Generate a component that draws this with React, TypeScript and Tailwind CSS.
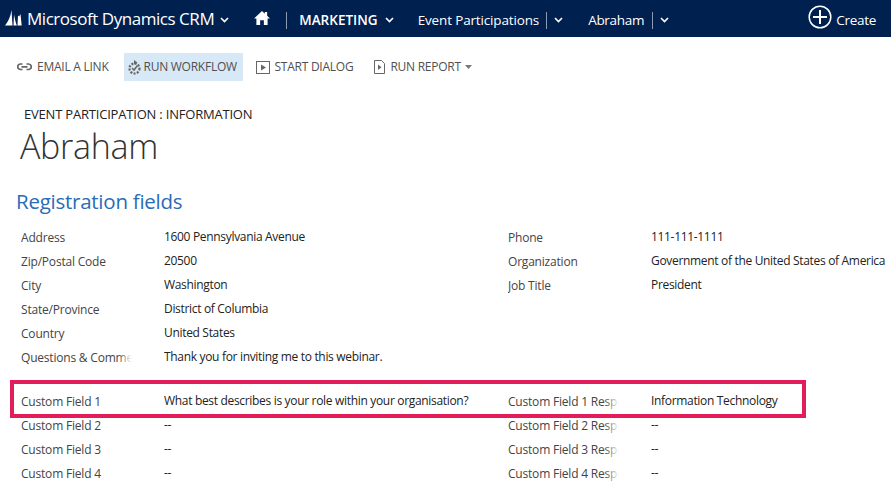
import React from "react";

const Chev = ({ className = "" }: { className?: string }) => (
  <svg width="9" height="6" viewBox="0 0 9 6" className={className}>
    <path d="M1 1l3.500 3.500L8 1" fill="none" stroke="#fff" strokeWidth="1.6" />
  </svg>
);
const Sep = ({ className = "" }: { className?: string }) => (
  <span className={`block w-px h-[17px] bg-[#8c9ab3] ${className}`} />
);

const Label = ({ text }: { text?: string }) => (
  <div className="relative w-[111px] overflow-hidden whitespace-nowrap text-[#444] tracking-[-0.2px]">
    {text}
    <span className="absolute right-0 top-0 h-full w-[14px] bg-linear-to-l from-white to-transparent" />
  </div>
);

const Row = ({ a, b, c, d }: { a: string; b: string; c?: string; d?: string }) => (
  <div className="flex h-6 items-center text-[12px] leading-6">
    <div className="w-[164px] pl-[21px] shrink-0"><Label text={a} /></div>
    <div className="w-[344px] shrink-0 overflow-hidden whitespace-nowrap text-[#222] -mt-[2px] tracking-[-0.32px]">{b}</div>
    <div className="w-[143px] shrink-0"><Label text={c} /></div>
    <div className="flex-1 overflow-hidden whitespace-nowrap text-[#222] -mt-[2px] tracking-[-0.32px]">{d}</div>
  </div>
);

export default function App() {
  return (
    <div className="w-[891px] h-[488px] overflow-hidden bg-white relative font-['Open_Sans','Noto_Sans',sans-serif]">
      <header className="h-[37px] bg-[#002050] flex items-center text-white">
        <svg width="17" height="16" viewBox="0 0 17 16" className="ml-[5px] -mt-[1px]" fill="#fff">
          <path d="M0 15.500C3 12 5.500 7 6.500 0l1 15.500z" />
          <path d="M8.500 15.500L9 4.500c.8 4 1.600 8 2.800 11z" />
          <path d="M12.500 15.500L13 5.500l1.200 1L15.500 4l1.200 11.500z" />
        </svg>
        <span className="ml-[5px] text-[17px] tracking-[-0.46px] leading-none -mt-[1px]">Microsoft Dynamics CRM</span>
        <Chev className="ml-[6px] mt-[2px]" />
        <svg width="16" height="14" viewBox="0 0 17 15" fill="#fff" className="ml-[25px] -mt-[1px]">
          <path d="M8.500 0L0 8h2.500v7h4v-5h4v5h4V8H17l-3-2.800V1h-2.500v2z" />
        </svg>
        <Sep className="ml-[16px] mt-[3px]" />
        <span className="ml-[12px] mt-[3px] text-[13.500px] font-semibold tracking-[0.02px]">MARKETING</span>
        <Chev className="ml-[7px] mt-[3px]" />
        <span className="ml-[24px] mt-[3px] text-[13.500px] tracking-[-0.15px]">Event Participations</span>
        <Sep className="ml-[7px] mt-[3px]" />
        <Chev className="ml-[7px] mt-[3px]" />
        <span className="ml-[25px] mt-[3px] text-[13.500px] tracking-[-0.3px]">Abraham</span>
        <Sep className="ml-[8px] mt-[3px]" />
        <Chev className="ml-[7px] mt-[3px]" />
        <div className="ml-auto mr-[15px] flex items-center">
          <svg width="24" height="24" viewBox="0 0 24 24" fill="none" stroke="#fff" className="-mt-[3px]">
            <circle cx="12" cy="12" r="10.800" strokeWidth="1.500" />
            <path d="M12 5v14M5 12h14" strokeWidth="2" />
          </svg>
          <span className="ml-[4px] mt-[3px] text-[13.500px] tracking-[-0.3px]">Create</span>
        </div>
      </header>

      <div className="flex items-center h-[28px] mt-[16px] pl-[17px] text-[12px] text-[#505050] tracking-[-0.25px]">
        <div className="flex items-center">
          <svg width="15" height="8" viewBox="0 0 15 8" fill="none" stroke="#666" strokeWidth="1.700">
            <path d="M5.500 1H3.500a2.500 2.500 0 0 0 0 5.500h2M9.500 1h2a2.500 2.500 0 0 1 0 5.500h-2M4.500 3.800h6" />
          </svg>
          <span className="ml-[5px]">EMAIL A LINK</span>
        </div>
        <div className="ml-[16px] h-[28px] w-[119px] bg-[#d7e9f7] flex items-center pl-[3px]">
          <svg width="15" height="15" viewBox="0 0 15 15" fill="none" stroke="#666">
            <circle cx="7.500" cy="8.500" r="5" strokeWidth="2.200" strokeDasharray="2 1.300" />
            <path d="M5 8l2 2 3.500-4.500" strokeWidth="1.500" />
            <path d="M7 0l3.500 2.500L7 4.500z" fill="#666" stroke="none" />
          </svg>
          <span className="ml-[1px]">RUN WORKFLOW</span>
        </div>
        <div className="ml-[13px] flex items-center">
          <svg width="14" height="13" viewBox="0 0 14 13" fill="none">
            <rect x=".5" y=".5" width="13" height="12" stroke="#666" />
            <path d="M5 3.500v6l5-3z" fill="#666" />
          </svg>
          <span className="ml-[4px]">START DIALOG</span>
        </div>
        <div className="ml-[21px] flex items-center">
          <svg width="11" height="14" viewBox="0 0 11 14" fill="none">
            <path d="M.5.5h7l3 3v10H.5z" stroke="#666" />
            <path d="M4 4.500v5.500l3.500-2.700z" fill="#666" />
          </svg>
          <span className="ml-[5px]">RUN REPORT</span>
          <svg width="7" height="4" viewBox="0 0 7 4" className="ml-[4px]"><path d="M0 0h7L3.500 4z" fill="#777" /></svg>
        </div>
      </div>

      <div className="mt-[25px] pl-[24px] text-[13px] leading-4 text-[#222] tracking-[-0.2px]">EVENT PARTICIPATION : INFORMATION</div>
      <h1 className="pl-[20px] mt-[2px] text-[34px] leading-[44px] font-light text-[#333] tracking-[-0.3px]">Abraham</h1>
      <h2 className="pl-[16px] mt-[19px] mb-[11px] text-[20.500px] leading-7 text-[#2a6cb5] tracking-[-0.25px]">Registration fields</h2>

      <div>
        <Row a="Address" b="1600 Pennsylvania Avenue" c="Phone" d="111-111-1111" />
        <Row a="Zip/Postal Code" b="20500" c="Organization" d="Government of the United States of America" />
        <Row a="City" b="Washington" c="Job Title" d="President" />
        <Row a="State/Province" b="District of Columbia" />
        <Row a="Country" b="United States" />
        <Row a="Questions & Comments" b="Thank you for inviting me to this webinar." />
        <div className="h-[20px]" />
        <Row a="Custom Field 1" b="What best describes is your role within your organisation?" c="Custom Field 1 Response" d="Information Technology" />
        <Row a="Custom Field 2" b="--" c="Custom Field 2 Response" d="--" />
        <Row a="Custom Field 3" b="--" c="Custom Field 3 Response" d="--" />
        <Row a="Custom Field 4" b="--" c="Custom Field 4 Response" d="--" />
      </div>

      <div className="absolute left-[10px] top-[380px] w-[796px] h-[38px] border-4 border-[#e31c5a]" />
    </div>
  );
}
